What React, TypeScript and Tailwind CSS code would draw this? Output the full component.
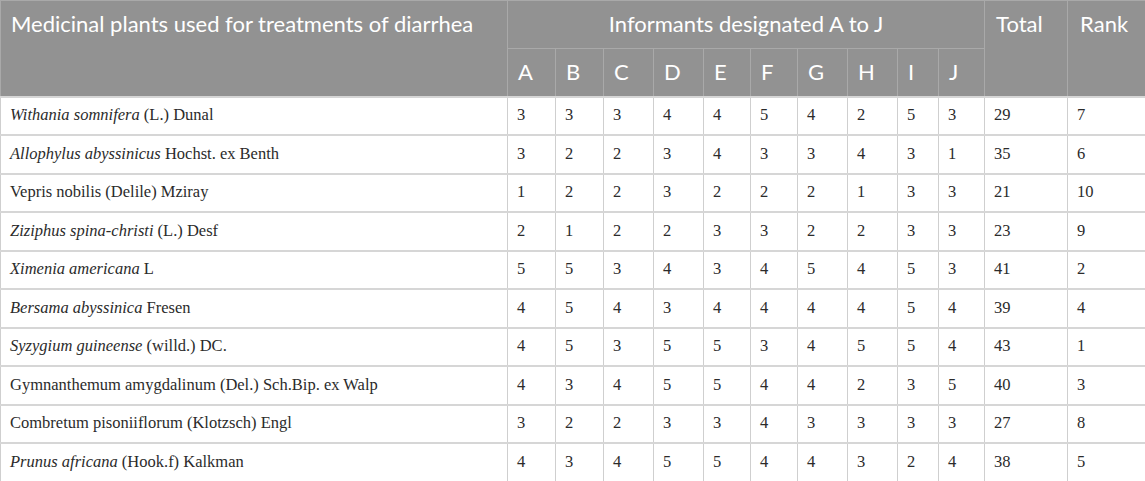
import React from "react";

type Row = { it: string; rest: string; v: number[]; total: number; rank: number };

const rows: Row[] = [
  { it: "Withania somnifera", rest: " (L.) Dunal", v: [3, 3, 3, 4, 4, 5, 4, 2, 5, 3], total: 29, rank: 7 },
  { it: "Allophylus abyssinicus", rest: " Hochst. ex Benth", v: [3, 2, 2, 3, 4, 3, 3, 4, 3, 1], total: 35, rank: 6 },
  { it: "", rest: "Vepris nobilis (Delile) Mziray", v: [1, 2, 2, 3, 2, 2, 2, 1, 3, 3], total: 21, rank: 10 },
  { it: "Ziziphus spina-christi", rest: " (L.) Desf", v: [2, 1, 2, 2, 3, 3, 2, 2, 3, 3], total: 23, rank: 9 },
  { it: "Ximenia americana", rest: " L", v: [5, 5, 3, 4, 3, 4, 5, 4, 5, 3], total: 41, rank: 2 },
  { it: "Bersama abyssinica", rest: " Fresen", v: [4, 5, 4, 3, 4, 4, 4, 4, 5, 4], total: 39, rank: 4 },
  { it: "Syzygium guineense", rest: " (willd.) DC.", v: [4, 5, 3, 5, 5, 3, 4, 5, 5, 4], total: 43, rank: 1 },
  { it: "", rest: "Gymnanthemum amygdalinum (Del.) Sch.Bip. ex Walp", v: [4, 3, 4, 5, 5, 4, 4, 2, 3, 5], total: 40, rank: 3 },
  { it: "", rest: "Combretum pisoniiflorum (Klotzsch) Engl", v: [3, 2, 2, 3, 3, 4, 3, 3, 3, 3], total: 27, rank: 8 },
  { it: "Prunus africana", rest: " (Hook.f) Kalkman", v: [4, 3, 4, 5, 5, 4, 4, 3, 2, 4], total: 38, rank: 5 },
];

const letters = ["A", "B", "C", "D", "E", "F", "G", "H", "I", "J"];
const widths = [507, 48, 48, 50, 50, 47, 47, 50, 50, 41, 46, 83, 78];

export default function App() {
  return (
    <div className="w-[1145px] h-[481px] bg-white overflow-hidden">
      <table
        className="w-[1145px] table-fixed border-collapse"
        style={{ fontFamily: "'Liberation Serif', serif" }}
      >
        <colgroup>
          {widths.map((w, i) => (
            <col key={i} style={{ width: w }} />
          ))}
        </colgroup>
        <thead className="bg-[#929292] text-white font-['Lato',sans-serif] text-[22px] leading-[26px]">
          <tr className="h-[48px]">
            <th rowSpan={2} className="border border-[#a9a9a9] text-left align-top font-normal pl-[10px] pt-[10px] whitespace-nowrap">
              Medicinal plants used for treatments of diarrhea
            </th>
            <th colSpan={10} className="border border-[#a9a9a9] text-center align-top font-normal pt-[10px] whitespace-nowrap">
              Informants designated A to J
            </th>
            <th rowSpan={2} className="border border-[#a9a9a9] text-left align-top font-normal pl-[11px] pt-[10px]">
              Total
            </th>
            <th rowSpan={2} className="border border-[#a9a9a9] text-left align-top font-normal pl-[12px] pt-[10px]">
              Rank
            </th>
          </tr>
          <tr className="h-[48px]">
            {letters.map((l) => (
              <th key={l} className="border border-[#a9a9a9] text-left font-normal pl-[10px] align-middle">
                {l}
              </th>
            ))}
          </tr>
        </thead>
        <tbody className="text-[16.5px] text-[#2b2b2b]">
          {rows.map((r, i) => (
            <tr key={i} className="h-[38.5px]">
              <td className="border-x border-x-[#cfcfcf] border-y-2 border-y-[#d6d6d6] pl-[9px] align-middle whitespace-nowrap">
                {r.it && <i>{r.it}</i>}
                {r.rest}
              </td>
              {r.v.map((n, j) => (
                <td key={j} className="border-x border-x-[#cfcfcf] border-y-2 border-y-[#d6d6d6] pl-[9px] align-middle">
                  {n}
                </td>
              ))}
              <td className="border-x border-x-[#cfcfcf] border-y-2 border-y-[#d6d6d6] pl-[9px] align-middle">{r.total}</td>
              <td className="border-x border-x-[#cfcfcf] border-y-2 border-y-[#d6d6d6] pl-[9px] align-middle">{r.rank}</td>
            </tr>
          ))}
        </tbody>
      </table>
    </div>
  );
}
